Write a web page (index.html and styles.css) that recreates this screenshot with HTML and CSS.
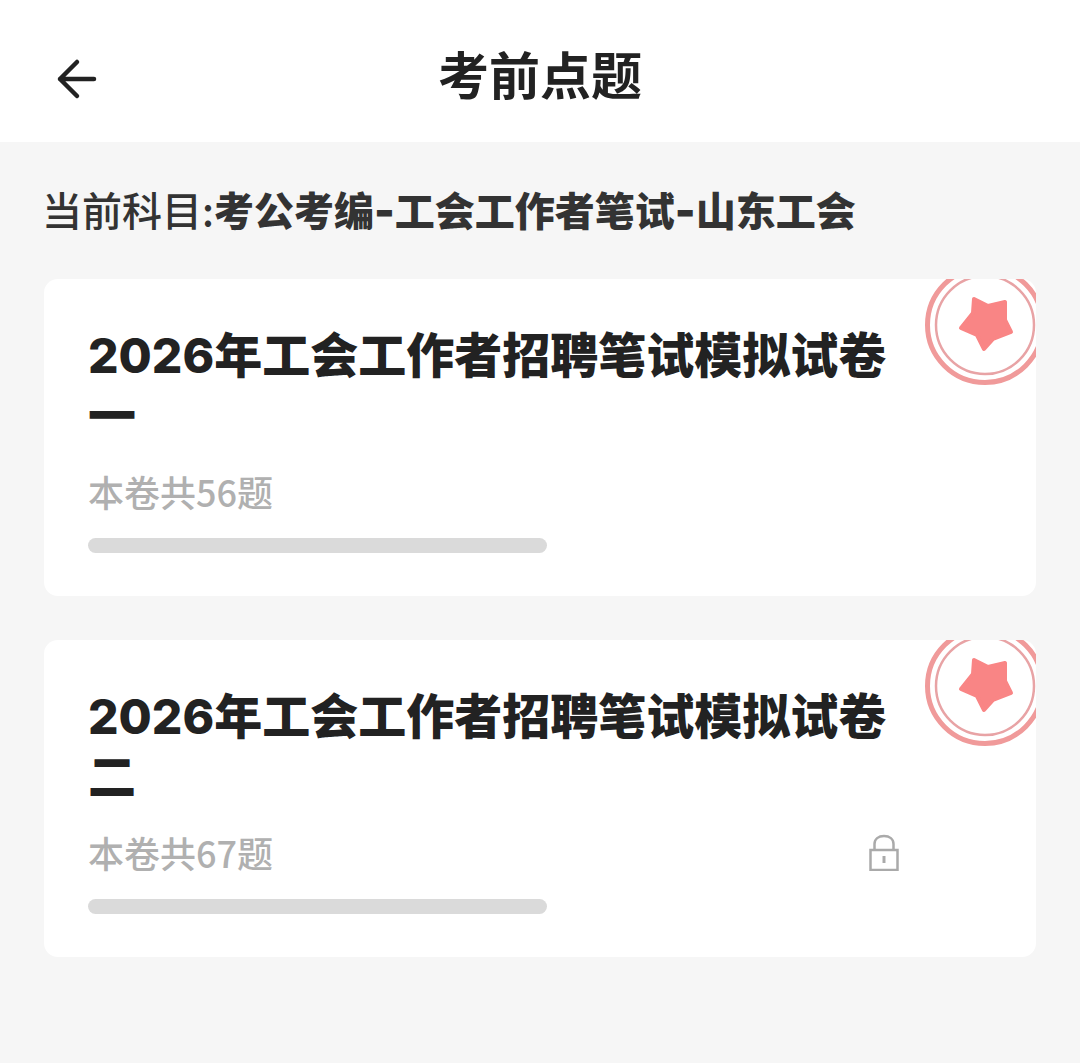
FILE: index.html
```html
<!DOCTYPE html>
<html lang="zh-CN">

<head>
  <meta charset="UTF-8">
  <title>考前点题</title>
  <link rel="stylesheet" href="styles.css">
</head>

<body>
  <header class="top_bar">
    <svg class="back_icon" width="44" height="44" viewBox="0 0 44 44">
      <path d="M39 22H5M22 5L5 22L22 39" fill="none" stroke="#222" stroke-width="4.5" stroke-linecap="round" stroke-linejoin="round" />
    </svg>
    <h1>考前点题</h1>
  </header>

  <main class="content">
    <p class="subject">当前科目:<b>考公考编<span class="dash">-</span>工会工作者笔试<span class="dash">-</span>山东工会</b></p>

    <section class="card">
      <svg class="badge" width="114" height="108" viewBox="0 0 114 108">
        <circle cx="63" cy="46" r="57.5" fill="none" stroke="#f09a9a" stroke-width="5" />
        <circle cx="63" cy="46" r="49" fill="none" stroke="#e8a3a5" stroke-width="2.5" />
        <path d="M52 20L66 27L83 23L83 41L89 53L71 60L62 70L55 56L39 49L51 34Z" fill="#f98585" stroke="#f98585" stroke-width="4" stroke-linejoin="round" />
      </svg>
      <h2><span class="year">2026</span>年工会工作者招聘笔试模拟试卷一</h2>
      <div class="info_row">
        <span class="count">本卷共56题</span>
      </div>
      <div class="progress"></div>
    </section>

    <section class="card">
      <svg class="badge" width="114" height="108" viewBox="0 0 114 108">
        <circle cx="63" cy="46" r="57.5" fill="none" stroke="#f09a9a" stroke-width="5" />
        <circle cx="63" cy="46" r="49" fill="none" stroke="#e8a3a5" stroke-width="2.5" />
        <path d="M52 20L66 27L83 23L83 41L89 53L71 60L62 70L55 56L39 49L51 34Z" fill="#f98585" stroke="#f98585" stroke-width="4" stroke-linejoin="round" />
      </svg>
      <h2><span class="year">2026</span>年工会工作者招聘笔试模拟试卷二</h2>
      <div class="info_row">
        <span class="count">本卷共67题</span>
        <svg class="lock_icon" width="32" height="38" viewBox="0 0 32 38">
          <path d="M2.5 17H29.5V37H2.5ZM6.500 17V11C6.500 6 10.500 3 16 3C21.500 3 25.500 6 25.500 11V17" fill="none" stroke="#aaa" stroke-width="2.5" />
          <path d="M16 23V30" stroke="#aaa" stroke-width="3" />
        </svg>
      </div>
      <div class="progress"></div>
    </section>
  </main>
</body>

</html>
```

FILE: styles.css
```css
* {
  box-sizing: border-box;
  margin: 0;
  padding: 0;
}

body {
  height: 1063px;
  overflow: hidden;
  background-color: #f6f6f6;
  font-family: "Noto Sans CJK SC", "Noto Sans", sans-serif;
}

.top_bar {
  position: relative;
  display: flex;
  align-items: center;
  justify-content: center;
  height: 142px;
  padding-top: 4px;
  background-color: #fff;
}

.top_bar h1 {
  font-size: 51px;
  font-weight: 700;
  line-height: 72px;
  color: #222;
}

.back_icon {
  position: absolute;
  left: 55px;
  top: 57px;
}

.content {
  padding: 38px 44px 0;
}

.subject {
  margin-bottom: 41px;
  margin-left: -2px;
  font-size: 40px;
  line-height: 58px;
  font-weight: 500;
  color: #333;
}

.subject b {
  font-weight: 900;
}

.subject .dash {
  font-family: Inter, sans-serif;
  font-size: 44px;
  line-height: 40px;
}

.card {
  position: relative;
  height: 317px;
  margin-bottom: 44px;
  padding: 43px 44px 0;
  overflow: hidden;
  background-color: #fff;
  border-radius: 14px;
}

.card h2 {
  width: 812px;
  font-size: 48px;
  font-weight: 900;
  line-height: 60px;
  color: #222;
}

.card h2 .year {
  font-family: Inter, sans-serif;
  font-size: 48px;
  font-weight: 800;
  line-height: 50px;
}

.badge {
  position: absolute;
  top: 0;
  right: 0;
}

.info_row {
  display: flex;
  align-items: center;
  justify-content: space-between;
  width: 812px;
  height: 56px;
  margin-top: 21px;
}

.count {
  font-size: 36px;
  font-weight: 500;
  line-height: 56px;
  color: #b0b0b0;
}

.progress {
  width: 459px;
  height: 15px;
  margin-top: 19px;
  background-color: #dadada;
  border-radius: 8px;
}
```
